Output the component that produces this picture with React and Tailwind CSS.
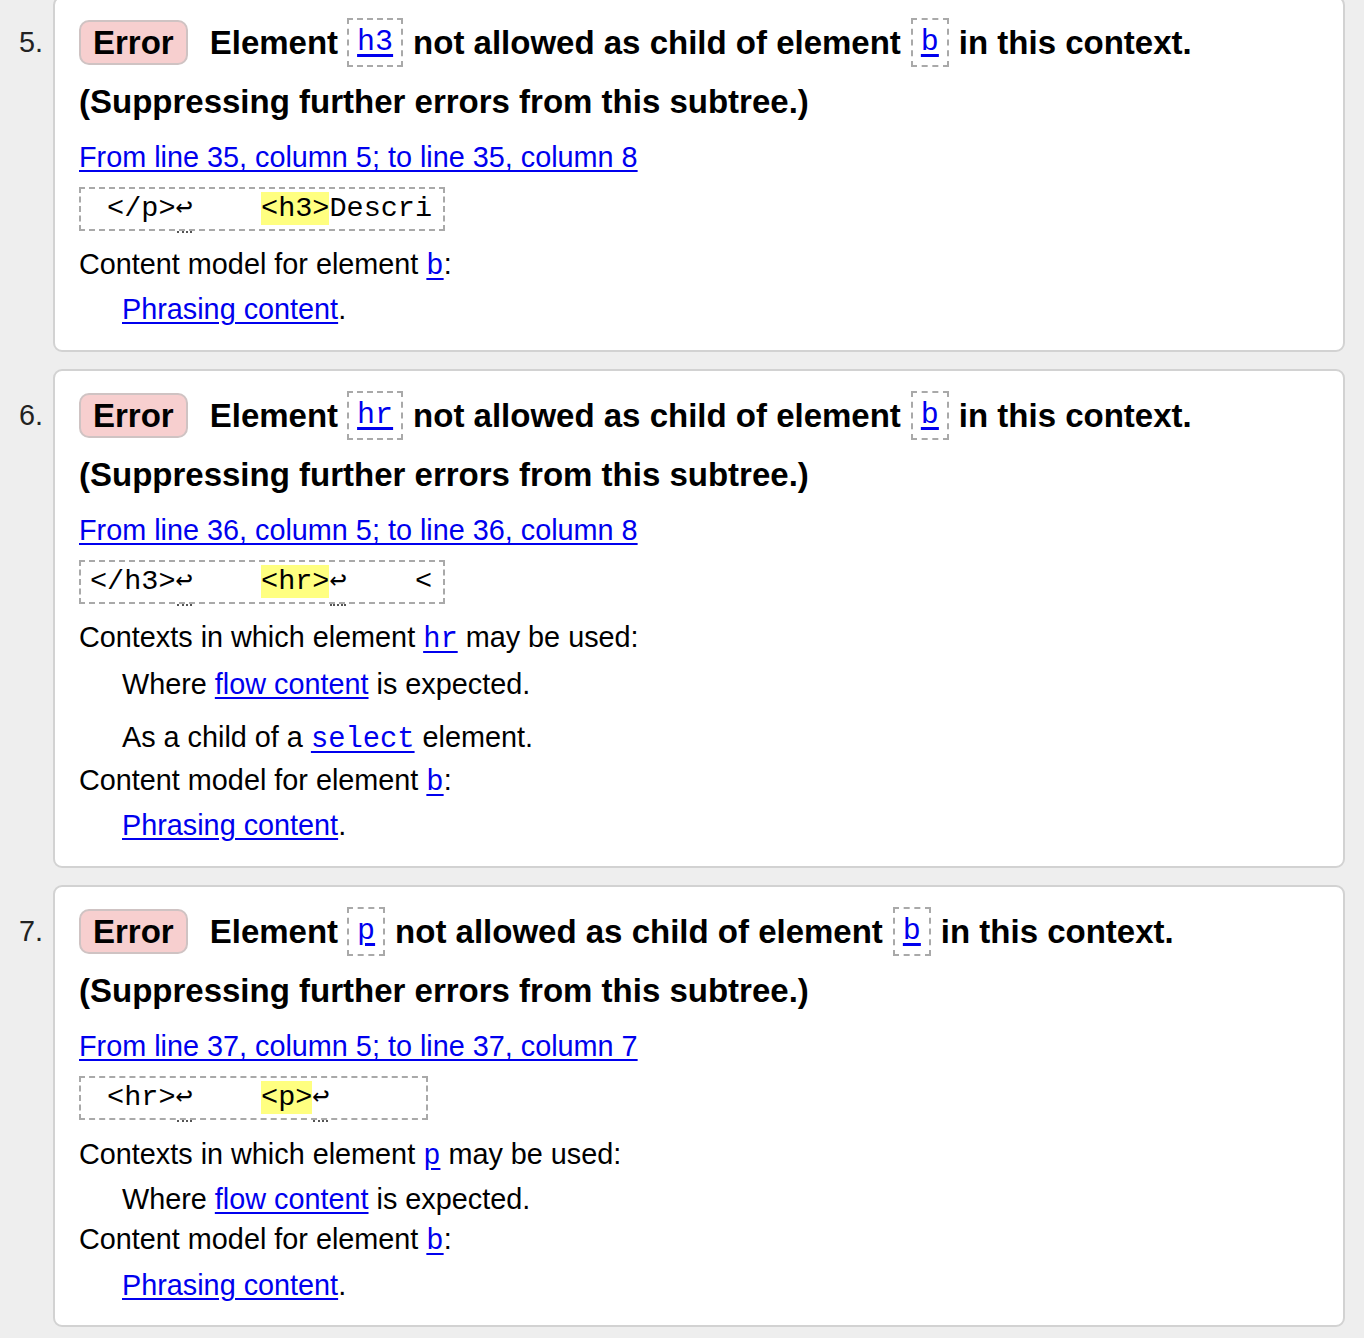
import React from 'react';

const sans = { fontFamily: '"Liberation Sans", Arial, sans-serif' };

const Lf = () => (
  <span className="relative inline-block w-[17.1px] text-center">
    ↩
    <span className="absolute left-[1px] right-[1px] bottom-[-4px] border-b-2 border-dotted border-[#555]" />
  </span>
);

const Hi = ({ children }) => <span className="bg-[#ffff80]">{children}</span>;

const Code = ({ children }) => (
  <span className="font-['Liberation_Mono',monospace] text-[#0000ee] underline underline-offset-[4px]">{children}</span>
);

const BoxCode = ({ children }) => (
  <span className="flex items-center h-[49px] px-[8px] border-2 border-dashed border-[#a9a9a9] font-['Liberation_Mono',monospace] font-normal text-[30px] text-[#0000ee] underline underline-offset-[4px]">
    {children}
  </span>
);

const Heading = ({ el, parent }) => (
  <>
    <div className="h-[59px] flex items-center whitespace-nowrap font-bold text-[33px]">
      <span className="h-[45px] flex items-center px-[12px] border-2 border-[#cfc3c3] bg-[#f7cfcf] rounded-[10px] mr-[22px]">
        Error
      </span>
      <span>Element</span>
      <span className="ml-[9px] mr-[10px]"><BoxCode>{el}</BoxCode></span>
      <span>not allowed as child of element</span>
      <span className="ml-[10px] mr-[10px]"><BoxCode>{parent}</BoxCode></span>
      <span>in this context.</span>
    </div>
    <div className="h-[59px] flex items-center font-bold text-[33px]">
      (Suppressing further errors from this subtree.)
    </div>
  </>
);

const Link = ({ children }) => (
  <a href="#" className="text-[#0000ee] underline underline-offset-[3px]">{children}</a>
);

const Location = ({ children }) => (
  <div className="h-[54px] flex items-center">
    <Link>{children}</Link>
  </div>
);

const Extract = ({ width, children }) => (
  <div
    className="mt-[2px] h-[44px] leading-[40px] pl-[9px] border-2 border-dashed border-[#a9a9a9] font-['Liberation_Mono',monospace] text-[28.5px] whitespace-pre text-black"
    style={{ width }}
  >
    {children}
  </div>
);

const Row = ({ mt, indent, children }) => (
  <div className={`h-[42px] flex items-center whitespace-nowrap ${indent ? 'pl-[43px]' : ''}`} style={{ marginTop: mt }}>
    <span>{children}</span>
  </div>
);

const Item = ({ num, children }) => (
  <div className="flex">
    <div className="w-[53px] pr-[10px] pt-[17px] text-right text-[28.8px] leading-[59px] text-[#222]">{num}.</div>
    <div className="flex-1 bg-white border-2 border-[#d2d2d2] rounded-[9px] pl-[24px] pr-[20px] pt-[15px] text-[28.8px] text-black">
      {children}
    </div>
  </div>
);

export default function App() {
  return (
    <div className="min-h-screen bg-[#eeeeee] pr-[19px] overflow-hidden" style={sans}>
      <div className="-mt-[4px] flex flex-col gap-[17px]">
        {/* 5 */}
        <Item num={5}>
          <Heading el="h3" parent="b" />
          <Location>From line 35, column 5; to line 35, column 8</Location>
          <Extract width={366}>
            <span>{' </p>'}</span><Lf /><span>{'    '}</span><Hi>{'<h3>'}</Hi><span>{'Descri'}</span>
          </Extract>
          <Row mt={14}>Content model for element <Code>b</Code>:</Row>
          <Row mt={2} indent><Link>Phrasing content</Link>.</Row>
          <div className="h-[19px]" />
        </Item>

        {/* 6 */}
        <Item num={6}>
          <Heading el="hr" parent="b" />
          <Location>From line 36, column 5; to line 36, column 8</Location>
          <Extract width={366}>
            <span>{'</h3>'}</span><Lf /><span>{'    '}</span><Hi>{'<hr>'}</Hi><Lf /><span>{'    <'}</span>
          </Extract>
          <Row mt={14}>Contexts in which element <Code>hr</Code> may be used:</Row>
          <Row mt={4} indent>Where <Link>flow content</Link> is expected.</Row>
          <Row mt={12} indent>As a child of a <Code>select</Code> element.</Row>
          <Row mt={1}>Content model for element <Code>b</Code>:</Row>
          <Row mt={2} indent><Link>Phrasing content</Link>.</Row>
          <div className="h-[19px]" />
        </Item>

        {/* 7 */}
        <Item num={7}>
          <Heading el="p" parent="b" />
          <Location>From line 37, column 5; to line 37, column 7</Location>
          <Extract width={349}>
            <span>{' <hr>'}</span><Lf /><span>{'    '}</span><Hi>{'<p>'}</Hi><Lf />
          </Extract>
          <Row mt={15}>Contexts in which element <Code>p</Code> may be used:</Row>
          <Row mt={2} indent>Where <Link>flow content</Link> is expected.</Row>
          <Row mt={-1}>Content model for element <Code>b</Code>:</Row>
          <Row mt={3} indent><Link>Phrasing content</Link>.</Row>
          <div className="h-[18px]" />
        </Item>
      </div>
    </div>
  );
}
